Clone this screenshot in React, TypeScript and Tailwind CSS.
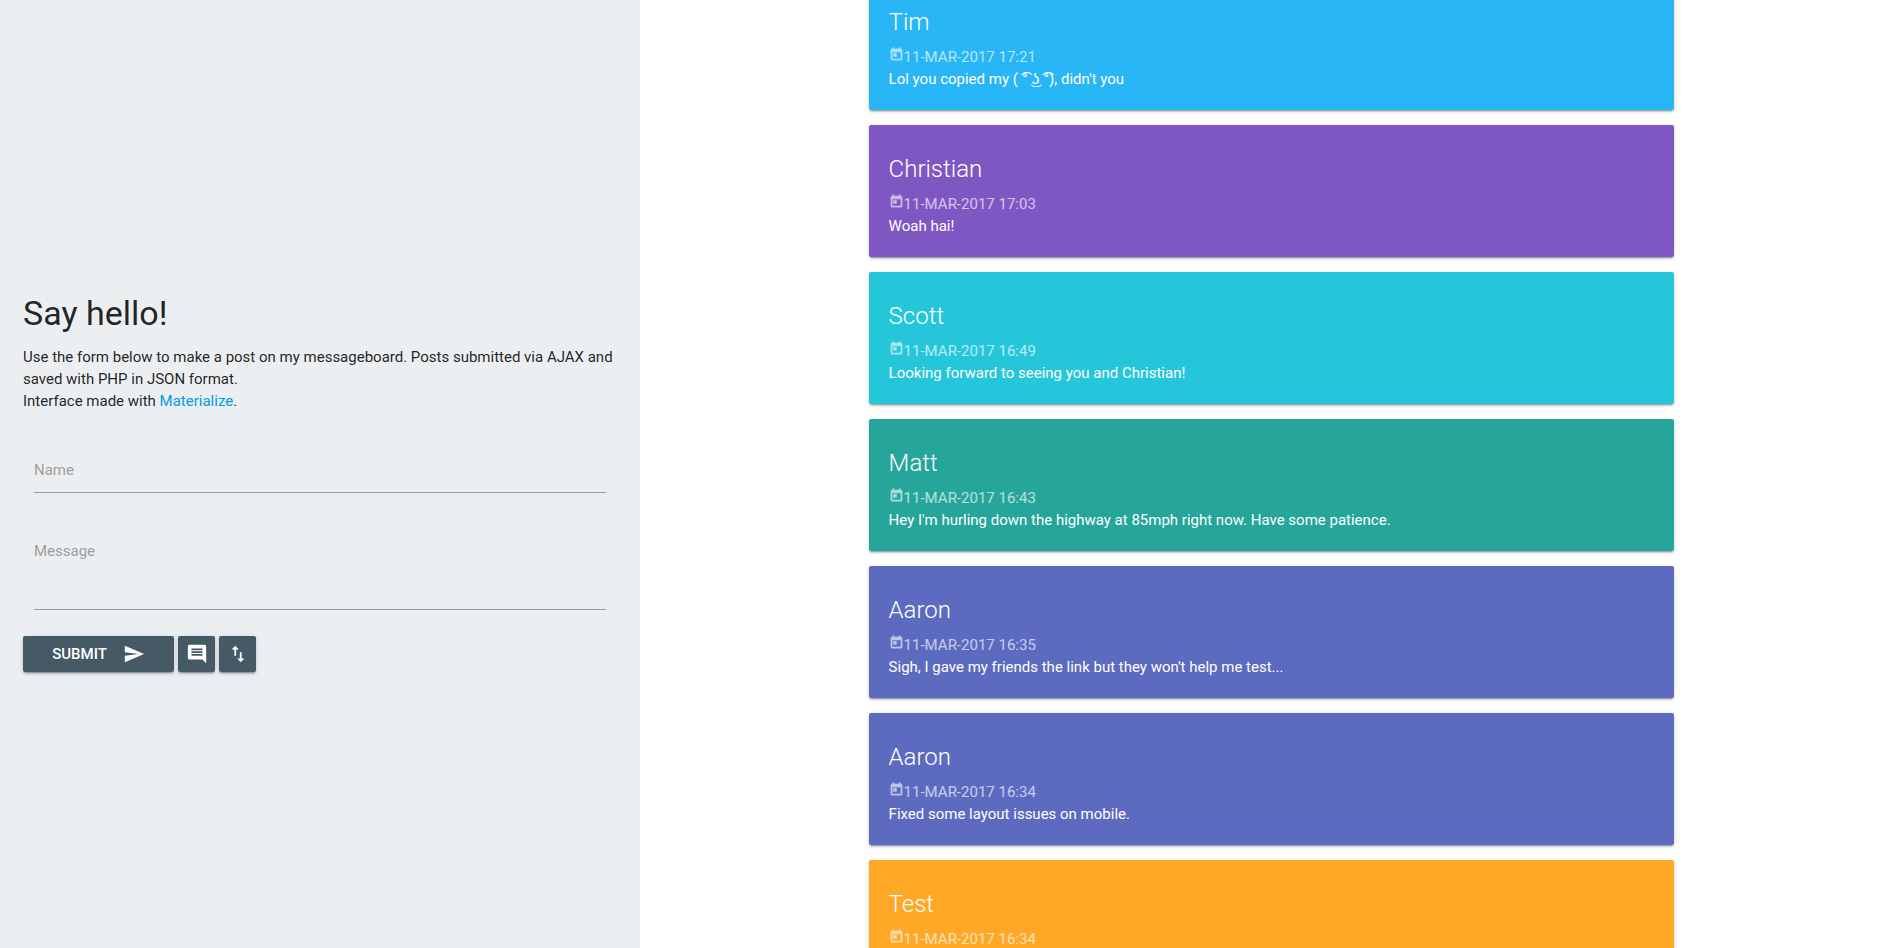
import { MdSend, MdComment, MdImportExport } from "react-icons/md";

type Post = { name: string; date: string; message: string; color: string };

const posts: Post[] = [
  { name: "Tim", date: "11-MAR-2017 17:21", message: "Lol you copied my ( ͡° ͜ʖ ͡°), didn't you", color: "bg-[#29b6f6]" },
  { name: "Christian", date: "11-MAR-2017 17:03", message: "Woah hai!", color: "bg-[#7e57c2]" },
  { name: "Scott", date: "11-MAR-2017 16:49", message: "Looking forward to seeing you and Christian!", color: "bg-[#26c6da]" },
  { name: "Matt", date: "11-MAR-2017 16:43", message: "Hey I'm hurling down the highway at 85mph right now. Have some patience.", color: "bg-[#26a69a]" },
  { name: "Aaron", date: "11-MAR-2017 16:35", message: "Sigh, I gave my friends the link but they won't help me test...", color: "bg-[#5c6bc0]" },
  { name: "Aaron", date: "11-MAR-2017 16:34", message: "Fixed some layout issues on mobile.", color: "bg-[#5c6bc0]" },
  { name: "Test", date: "11-MAR-2017 16:34", message: "", color: "bg-[#ffa726]" },
];

const shadow =
  "shadow-[0_2px_2px_0_rgba(0,0,0,0.14),0_1px_5px_0_rgba(0,0,0,0.12),0_3px_1px_-2px_rgba(0,0,0,0.2)]";
const button = `${shadow} flex h-9 items-center justify-center rounded-xs bg-[#455a64] text-white`;

function TodayIcon() {
  return (
    <svg viewBox="0 0 24 24" className="mt-px size-[15px] opacity-60" fill="currentColor" stroke="currentColor" strokeWidth="0.8" aria-hidden>
      <path d="M19 3h-1V1h-2v2H8V1H6v2H5c-1.11 0-1.99.9-1.99 2L3 19c0 1.1.89 2 2 2h14c1.1 0 2-.9 2-2V5c0-1.1-.9-2-2-2zm0 16H5V8h14v11zM7 10h5v5H7z" />
    </svg>
  );
}

function PostCard({ post }: { post: Post }) {
  return (
    <article className={`${shadow} ${post.color} min-h-33 shrink-0 rounded-xs p-5 text-white`}>
      <h2 className="text-2xl leading-12 font-light">{post.name}</h2>
      <p className="flex">
        <TodayIcon />
        <time className="text-white/65">{post.date}</time>
      </p>
      <p>{post.message}</p>
    </article>
  );
}

export default function App() {
  return (
    <div className="flex h-screen overflow-hidden bg-white font-[Roboto,sans-serif] text-[15px] leading-[22px] text-black/87">
      <aside className="flex w-[33.7%] shrink-0 flex-col justify-center bg-[#eceff1] px-[23px] pt-[18px]">
        <h1 className="mb-[14px] text-[34px] leading-[38px]">Say hello!</h1>
        <p>
          Use the form below to make a post on my messageboard. Posts submitted via AJAX and saved with PHP in JSON
          format.
          <br />
          Interface made with{" "}
          <a href="#materialize" className="text-[#039be5]">
            Materialize
          </a>
          .
        </p>
        <form className="mt-9" onSubmit={(e) => e.preventDefault()}>
          <div className="flex flex-col gap-9 px-[11px]">
            <input
              aria-label="Name"
              placeholder="Name"
              className="h-[45px] border-b border-[#9e9e9e] bg-transparent outline-none placeholder:text-[#9e9e9e]"
            />
            <textarea
              aria-label="Message"
              placeholder="Message"
              className="h-[81px] resize-none border-b border-[#9e9e9e] bg-transparent pt-[11px] outline-none placeholder:text-[#9e9e9e]"
            />
          </div>
          <div className="mt-[26px] flex gap-1">
            <button type="submit" className={`${button} w-[151px] gap-4 font-medium`}>
              SUBMIT
              <MdSend className="size-[22px]" aria-hidden />
            </button>
            <button type="button" aria-label="Comments" className={`${button} w-[37px]`}>
              <MdComment className="size-[22px]" aria-hidden />
            </button>
            <button type="button" aria-label="Reverse order" className={`${button} w-[37px]`}>
              <MdImportExport className="size-[22px]" aria-hidden />
            </button>
          </div>
        </form>
      </aside>
      <main className="flex min-w-0 grow justify-center pl-1">
        <div className="-mt-[22px] flex w-[64.2%] flex-col gap-[15px]">
          {posts.map((post, i) => (
            <PostCard key={i} post={post} />
          ))}
        </div>
      </main>
    </div>
  );
}
